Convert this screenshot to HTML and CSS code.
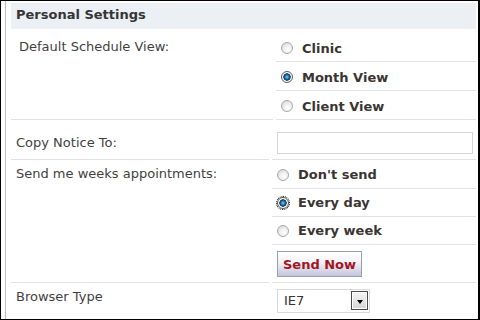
FILE: index.html
```html
<!DOCTYPE html>
<html>
<head>
<meta charset="utf-8">
<link rel="stylesheet" href="styles.css">
</head>
<body>
<div class="frame">
  <div class="inner">
    <div class="hdr">Personal Settings</div>

    <div class="row row-first">
      <div class="lbl lbl-first">Default Schedule View:</div>
      <div class="val val-first">
        <div class="opt opt-tall"><span class="radio"></span>Clinic</div>
        <div class="opt opt-tall"><span class="radio on"></span>Month View</div>
        <div class="opt opt-tall opt-last"><span class="radio"></span>Client View</div>
      </div>
    </div>

    <div class="row">
      <div class="lbl lbl-input">Copy Notice To:</div>
      <div class="val val-input"><input class="txt" type="text"></div>
    </div>

    <div class="row">
      <div class="lbl">Send me weeks appointments:</div>
      <div class="val val-send">
        <div class="opt"><span class="radio"></span>Don't send</div>
        <div class="opt"><span class="radio on focus"></span>Every day</div>
        <div class="opt"><span class="radio"></span>Every week</div>
        <div class="btn-cell"><button class="btn" type="button">Send Now</button></div>
      </div>
    </div>

    <div class="row row-last">
      <div class="lbl">Browser Type</div>
      <div class="val val-select">
        <div class="select"><span class="sel-text">IE7</span><span class="drop"><span class="tri"></span></span></div>
      </div>
    </div>
  </div>
</div>
</body>
</html>
```

FILE: styles.css
```css
html, body {
  margin: 0;
  padding: 0;
  background: #fff;
}

body {
  font-family: "DejaVu Sans", Verdana, sans-serif;
  font-size: 13px;
  color: #3d3d3d;
}

.frame {
  width: 480px;
  height: 320px;
  box-sizing: border-box;
  border-top: 1px solid #000;
  border-left: 1px solid #000;
  border-bottom: 1px solid #000;
  border-right: 2px solid #000;
  padding-left: 4px;
  overflow: hidden;
}

.inner {
  height: 100%;
  box-sizing: border-box;
  border-left: 1px solid #bdbdbd;
  padding: 2px 2px 0 5px;
}

.hdr {
  height: 26px;
  box-sizing: border-box;
  background: #eceff3;
  padding: 4px 0 0 5px;
  font-weight: bold;
  font-size: 13px;
  line-height: 16px;
  color: #353535;
}

.row {
  display: grid;
  grid-template-columns: 258px 204px;
  column-gap: 3px;
}

.row-first {
  grid-template-columns: 262px 200px;
}

.lbl,
.val {
  border-bottom: 1px solid #dfe2e6;
}

.row-last .lbl,
.row-last .val {
  border-bottom: none;
}

.lbl {
  padding: 6px 0 0 5px;
  line-height: 16px;
  color: #3f3f3f;
}

.lbl-first {
  padding: 10px 0 0 8px;
}

.lbl-input {
  padding-top: 15px;
}

.val-first {
  padding-top: 4px;
}

.val-send {
  padding-top: 1px;
}

.val-input {
  padding: 12px 0 5px 5px;
}

.val-select {
  padding: 6px 0 6px 5px;
}

.opt {
  display: flex;
  align-items: center;
  height: 27px;
  padding-left: 5px;
  border-bottom: 1px solid #dfe2e6;
  font-weight: bold;
  font-size: 13px;
  color: #3a3532;
}

.opt-tall {
  height: 26px;
  padding-top: 2px;
}

.opt-last {
  border-bottom: none;
}

.radio {
  flex: none;
  width: 12px;
  height: 12px;
  box-sizing: border-box;
  border-radius: 50%;
  border: 1px solid #a8a8a8;
  background: radial-gradient(circle at 62% 68%, #ffffff 0, #f3f3f3 35%, #d2d2d2 100%);
  margin-right: 9px;
}

.radio.on {
  border-color: #5a5a5a;
  background: radial-gradient(circle at 50% 50%, #9bd6f7 0, #2b8ccb 1.4px, #14598d 2.6px, #0b2f4d 3.4px, #ffffff 4px, #e6e6e6 100%);
}

.radio.focus {
  outline: 1px dotted #000;
  outline-offset: 0;
}

.txt {
  display: block;
  width: 196px;
  height: 22px;
  box-sizing: border-box;
  border: 1px solid #d6d6d6;
  margin: 0;
  padding: 0 4px;
  background: #fff;
}

.btn-cell {
  padding: 6px 0 5px 5px;
}

.btn {
  display: block;
  width: 85px;
  height: 26px;
  margin: 0;
  padding: 0;
  box-sizing: border-box;
  border: 1px solid #9aa0a8;
  background: linear-gradient(#ffffff 0%, #f4f4f9 40%, #c4c4dc 100%);
  font-family: "DejaVu Sans", Verdana, sans-serif;
  font-weight: bold;
  font-size: 13px;
  color: #a3141e;
}

.select {
  display: flex;
  align-items: center;
  width: 93px;
  height: 24px;
  box-sizing: border-box;
  border: 1px solid #dadada;
  background: #fff;
  padding: 0 1px 0 6px;
}

.sel-text {
  flex: 1;
  font-size: 13px;
  color: #333;
  line-height: 16px;
}

.drop {
  display: flex;
  align-items: center;
  justify-content: center;
  width: 17px;
  height: 19px;
  box-sizing: border-box;
  border: 1px solid #4a4a4a;
  box-shadow: inset 0 0 0 1px #ffffff;
  background: linear-gradient(#f6f6f6, #d4d4d4);
  margin-bottom: 1px;
}

.tri {
  width: 0;
  height: 0;
  margin-top: 3px;
  border-left: 3.5px solid transparent;
  border-right: 3.5px solid transparent;
  border-top: 4px solid #000;
}
```
